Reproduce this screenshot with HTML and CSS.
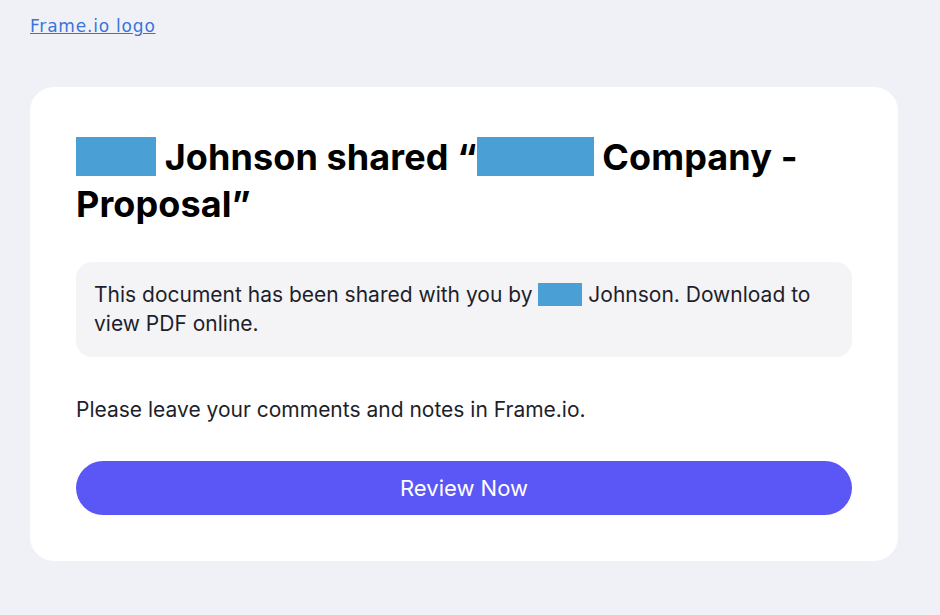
FILE: index.html
```html
<!DOCTYPE html>
<html>
<head>
<meta charset="utf-8">
<link rel="stylesheet" href="styles.css">
</head>
<body>
<div class="page">
  <header class="top">
    <a class="logo" href="#">Frame.io logo</a>
  </header>
  <main class="card">
    <h1 class="title"><span class="redact redact-h1"></span> Johnson shared “<span class="redact redact-h2"></span> Company - Proposal”</h1>
    <div class="note">This document has been shared with you by <span class="redact redact-p"></span> Johnson. Download to view PDF online.</div>
    <p class="text">Please leave your comments and notes in Frame.io.</p>
    <a class="button" href="#">Review Now</a>
  </main>
</div>
</body>
</html>
```
FILE: styles.css
```css
html, body {
  margin: 0;
  padding: 0;
  background: #f0f1f6;
}
body {
  font-family: Inter, "Noto Sans", sans-serif;
  color: #1e1f2a;
}
.page {
  padding: 14px 42px 0 30px;
}
.top {
  height: 73px;
}
.logo {
  font-family: "DejaVu Sans", sans-serif;
  font-size: 17px;
  letter-spacing: 0.8px;
  color: #3a74d9;
  text-decoration: underline;
  line-height: 24px;
}
.card {
  background: #ffffff;
  border-radius: 24px;
  padding: 47px 46px 46px 46px;
  display: flex;
  flex-direction: column;
}
.title {
  margin: 0;
  font-size: 36px;
  line-height: 47px;
  font-weight: 700;
  color: #000;
  letter-spacing: 0.1px;
}
.redact {
  display: inline-block;
  background: #4aa0d5;
}
.redact-h1 {
  width: 80px;
  height: 39px;
  vertical-align: -6px;
}
.redact-h2 {
  width: 117px;
  height: 39px;
  vertical-align: -6px;
}
.redact-p {
  width: 44px;
  height: 23px;
  vertical-align: -4px;
}
.note {
  margin-top: 34px;
  background: #f4f4f7;
  border-radius: 16px;
  padding: 18px 18px 19px;
  font-size: 21px;
  line-height: 29px;
}
.text {
  margin: 38px 0 0;
  font-size: 21px;
  line-height: 29px;
}
.button {
  margin-top: 37px;
  height: 54px;
  border-radius: 27px;
  background: #5b57f7;
  color: #fff;
  font-size: 22px;
  text-decoration: none;
  display: flex;
  align-items: center;
  justify-content: center;
}
```
